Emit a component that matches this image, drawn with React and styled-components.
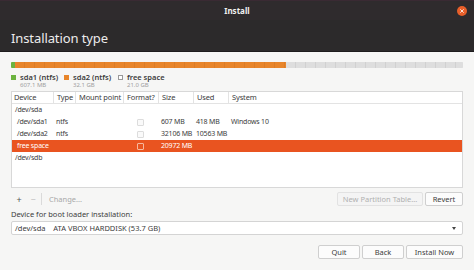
import React from 'react'
import styled, { createGlobalStyle } from 'styled-components'

const GlobalStyle = createGlobalStyle`
  html, body {
    margin: 0;
    padding: 0;
    background: #2e2a2c;
  }
  body {
    font-family: "Noto Sans", "DejaVu Sans", sans-serif;
  }
`

const columns = [
  { title: 'Device', width: 41 },
  { title: 'Type', width: 22 },
  { title: 'Mount point', width: 48 },
  { title: 'Format?', width: 35 },
  { title: 'Size', width: 35 },
  { title: 'Used', width: 35 },
  { title: 'System', width: 236 },
]

const rows = [
  { device: '/dev/sda', indent: false },
  { device: '/dev/sda1', indent: true, type: 'ntfs', check: true, size: '607 MB', used: '418 MB', system: 'Windows 10' },
  { device: '/dev/sda2', indent: true, type: 'ntfs', check: true, size: '32106 MB', used: '10563 MB' },
  { device: 'free space', indent: true, check: true, size: '20972 MB', selected: true },
  { device: '/dev/sdb', indent: false },
]

const legend = [
  { name: 'sda1 (ntfs)', size: '607.1 MB', color: '#6cb33f', width: 53 },
  { name: 'sda2 (ntfs)', size: '32.1 GB', color: '#e8852a', width: 54 },
  { name: 'free space', size: '21.0 GB', color: '#ffffff', width: 60 },
]

const App = () => {
  return (
    <Window>
      <GlobalStyle />
      <TitleBar>
        <span />
        <WindowTitle>Install</WindowTitle>
        <CloseButton>
          <svg width="10" height="10" viewBox="0 0 10 10">
            <circle cx="5" cy="5" r="5" fill="#e95f2a" />
            <path d="M3.3 3.3 L6.7 6.7 M6.7 3.3 L3.3 6.7" stroke="#fbe2d6" strokeWidth="1" />
          </svg>
        </CloseButton>
      </TitleBar>
      <Header>Installation type</Header>
      <Body>
        <PartitionBar>
          <Segment $color="#6cb33f" $width={4} />
          <Segment $color="#e8852a" $width={271} />
          <Segment $color="#dedede" $grow />
        </PartitionBar>

        <Legend>
          {legend.map((item) => (
            <LegendItem key={item.name} $width={item.width}>
              <LegendName>
                <Swatch $color={item.color} />
                {item.name}
              </LegendName>
              <LegendSize>{item.size}</LegendSize>
            </LegendItem>
          ))}
        </Legend>

        <Table>
          <HeadRow>
            {columns.map((col, i) => (
              <HeadCell key={col.title} $width={col.width} $first={i === 0}>
                {col.title}
              </HeadCell>
            ))}
          </HeadRow>
          {rows.map((row) => (
            <Row key={row.device} $selected={row.selected}>
              <Cell $width={columns[0].width} $indent={row.indent}>{row.device}</Cell>
              <Cell $width={columns[1].width}>{row.type}</Cell>
              <Cell $width={columns[2].width} />
              <Cell $width={columns[3].width}>
                {row.check && <CheckBox $selected={row.selected} />}
              </Cell>
              <Cell $width={columns[4].width}>{row.size}</Cell>
              <Cell $width={columns[5].width}>{row.used}</Cell>
              <Cell $width={columns[6].width}>{row.system}</Cell>
            </Row>
          ))}
        </Table>

        <Toolbar>
          <ToolIcon>+</ToolIcon>
          <ToolIcon $disabled>−</ToolIcon>
          <ToolDivider />
          <ToolText>Change...</ToolText>
          <Spacer />
          <Button $disabled $width={86}>New Partition Table...</Button>
          <Button $width={38}>Revert</Button>
        </Toolbar>

        <FieldLabel>Device for boot loader installation:</FieldLabel>
        <Combo>
          <span>/dev/sda&nbsp;&nbsp;&nbsp;&nbsp;ATA VBOX HARDDISK (53.7 GB)</span>
          <Arrow />
        </Combo>

        <Footer>
          <Button $width={42}>Quit</Button>
          <Button $width={42}>Back</Button>
          <Button $width={57}>Install Now</Button>
        </Footer>
      </Body>
    </Window>
  )
}

export default App

const Window = styled.div`
  width: 474px;
  height: 270px;
  display: flex;
  flex-direction: column;
  overflow: hidden;
  background: #f6f6f5;
`
const TitleBar = styled.div`
  height: 20px;
  display: grid;
  grid-template-columns: 1fr auto 1fr;
  align-items: center;
  background: #2f2b2d;
  border-top: 1px solid #3a2a33;
  box-sizing: border-box;
`
const WindowTitle = styled.div`
  color: #f2f2f2;
  font-size: 8px;
  font-weight: 700;
`
const CloseButton = styled.div`
  justify-self: end;
  width: 10px;
  height: 10px;
  margin-right: 7px;
  display: flex;
`
const Header = styled.div`
  height: 32px;
  box-sizing: border-box;
  padding: 5px 0 0 11px;
  display: flex;
  align-items: center;
  background: #2c2a2b;
  border-bottom: 1px solid #1e1c1d;
  color: #ececec;
  font-size: 13px;
  letter-spacing: -0.1px;
`
const Body = styled.div`
  flex: 1;
  padding: 10px 11px 0 11px;
  display: flex;
  flex-direction: column;
`
const PartitionBar = styled.div`
  height: 6px;
  display: flex;
  border-radius: 1px;
  overflow: hidden;
  box-shadow: inset 0 0 0 1px rgba(0, 0, 0, 0.06);
`
const Segment = styled.div`
  width: ${(p) => (p.$grow ? 'auto' : `${p.$width}px`)};
  flex: ${(p) => (p.$grow ? 1 : 'none')};
  background:
    repeating-linear-gradient(90deg, transparent 0 9px, rgba(0, 0, 0, 0.06) 9px 10px),
    linear-gradient(${(p) => p.$color}, ${(p) => p.$color});
`
const Legend = styled.div`
  display: flex;
  margin-top: 4px;
  height: 19px;
`
const LegendItem = styled.div`
  width: ${(p) => p.$width}px;
  display: flex;
  flex-direction: column;
`
const LegendName = styled.div`
  display: flex;
  align-items: center;
  gap: 4px;
  font-size: 7.5px;
  font-weight: 600;
  color: #3d3d3d;
  line-height: 10px;
`
const Swatch = styled.span`
  width: 5px;
  height: 5px;
  background: ${(p) => p.$color};
  border: ${(p) => (p.$color === '#ffffff' ? '1px solid #999' : 'none')};
  box-sizing: border-box;
`
const LegendSize = styled.div`
  padding-left: 9px;
  font-size: 6px;
  color: #a0a0a0;
  line-height: 7px;
`
const Table = styled.div`
  height: 97px;
  box-sizing: border-box;
  border: 1px solid #d8d8d8;
  background: #ffffff;
  display: flex;
  flex-direction: column;
`
const HeadRow = styled.div`
  height: 12px;
  display: flex;
  border-bottom: 1px solid #e3e3e3;
  box-sizing: border-box;
`
const HeadCell = styled.div`
  width: ${(p) => p.$width}px;
  flex: none;
  box-sizing: border-box;
  padding-left: ${(p) => (p.$first ? 2 : 3)}px;
  border-left: ${(p) => (p.$first ? 'none' : '1px solid #e3e3e3')};
  font-size: 7.5px;
  letter-spacing: -0.15px;
  line-height: 11px;
  color: #3c3c3c;
  white-space: nowrap;
`
const Row = styled.div`
  height: 12px;
  display: flex;
  align-items: center;
  background: ${(p) => (p.$selected ? '#e95420' : 'transparent')};
  color: ${(p) => (p.$selected ? '#ffffff' : '#3c3c3c')};
`
const Cell = styled.div`
  width: ${(p) => p.$width}px;
  flex: none;
  box-sizing: border-box;
  padding-left: ${(p) => (p.$indent ? 5 : 3)}px;
  font-size: 7px;
  letter-spacing: -0.2px;
  line-height: 12px;
  white-space: nowrap;
  display: flex;
  align-items: center;
`
const CheckBox = styled.span`
  width: 7px;
  height: 7px;
  margin-left: 11px;
  box-sizing: border-box;
  border: 1px solid ${(p) => (p.$selected ? '#f6b89d' : '#dcdcdc')};
  border-radius: 1px;
  background: ${(p) => (p.$selected ? 'transparent' : '#fafafa')};
`
const Toolbar = styled.div`
  margin-top: 4px;
  height: 14px;
  display: flex;
  align-items: center;
`
const ToolIcon = styled.span`
  width: 14px;
  text-align: center;
  font-size: 9px;
  color: ${(p) => (p.$disabled ? '#bdbdbd' : '#555')};
  margin-left: ${(p) => (p.$disabled ? 0 : 1)}px;
`
const ToolDivider = styled.span`
  width: 1px;
  height: 12px;
  background: #dadada;
  margin: 0 7px 0 1px;
`
const ToolText = styled.span`
  font-size: 7.5px;
  color: #a8a8a8;
`
const Spacer = styled.div`
  flex: 1;
`
const Button = styled.div`
  width: ${(p) => p.$width}px;
  height: 14px;
  box-sizing: border-box;
  display: flex;
  align-items: center;
  justify-content: center;
  border: 1px solid ${(p) => (p.$disabled ? '#e2e2e2' : '#cfcfcf')};
  border-radius: 2px;
  background: ${(p) => (p.$disabled ? '#f4f4f4' : '#fcfcfc')};
  color: ${(p) => (p.$disabled ? '#b0b0b0' : '#3c3c3c')};
  font-size: 7.5px;
  margin-left: 2px;
  white-space: nowrap;
`
const FieldLabel = styled.div`
  margin-top: 3px;
  font-size: 7.5px;
  line-height: 10px;
  color: #3c3c3c;
`
const Combo = styled.div`
  margin-top: 2px;
  height: 14px;
  box-sizing: border-box;
  border: 1px solid #d4d4d4;
  border-radius: 2px;
  background: #ffffff;
  display: flex;
  align-items: center;
  justify-content: space-between;
  padding: 0 6px 0 3px;
  font-size: 7.5px;
  color: #3c3c3c;
`
const Arrow = styled.span`
  width: 0;
  height: 0;
  border-left: 2.5px solid transparent;
  border-right: 2.5px solid transparent;
  border-top: 3px solid #444;
`
const Footer = styled.div`
  margin-top: 10px;
  display: flex;
  justify-content: flex-end;
`
